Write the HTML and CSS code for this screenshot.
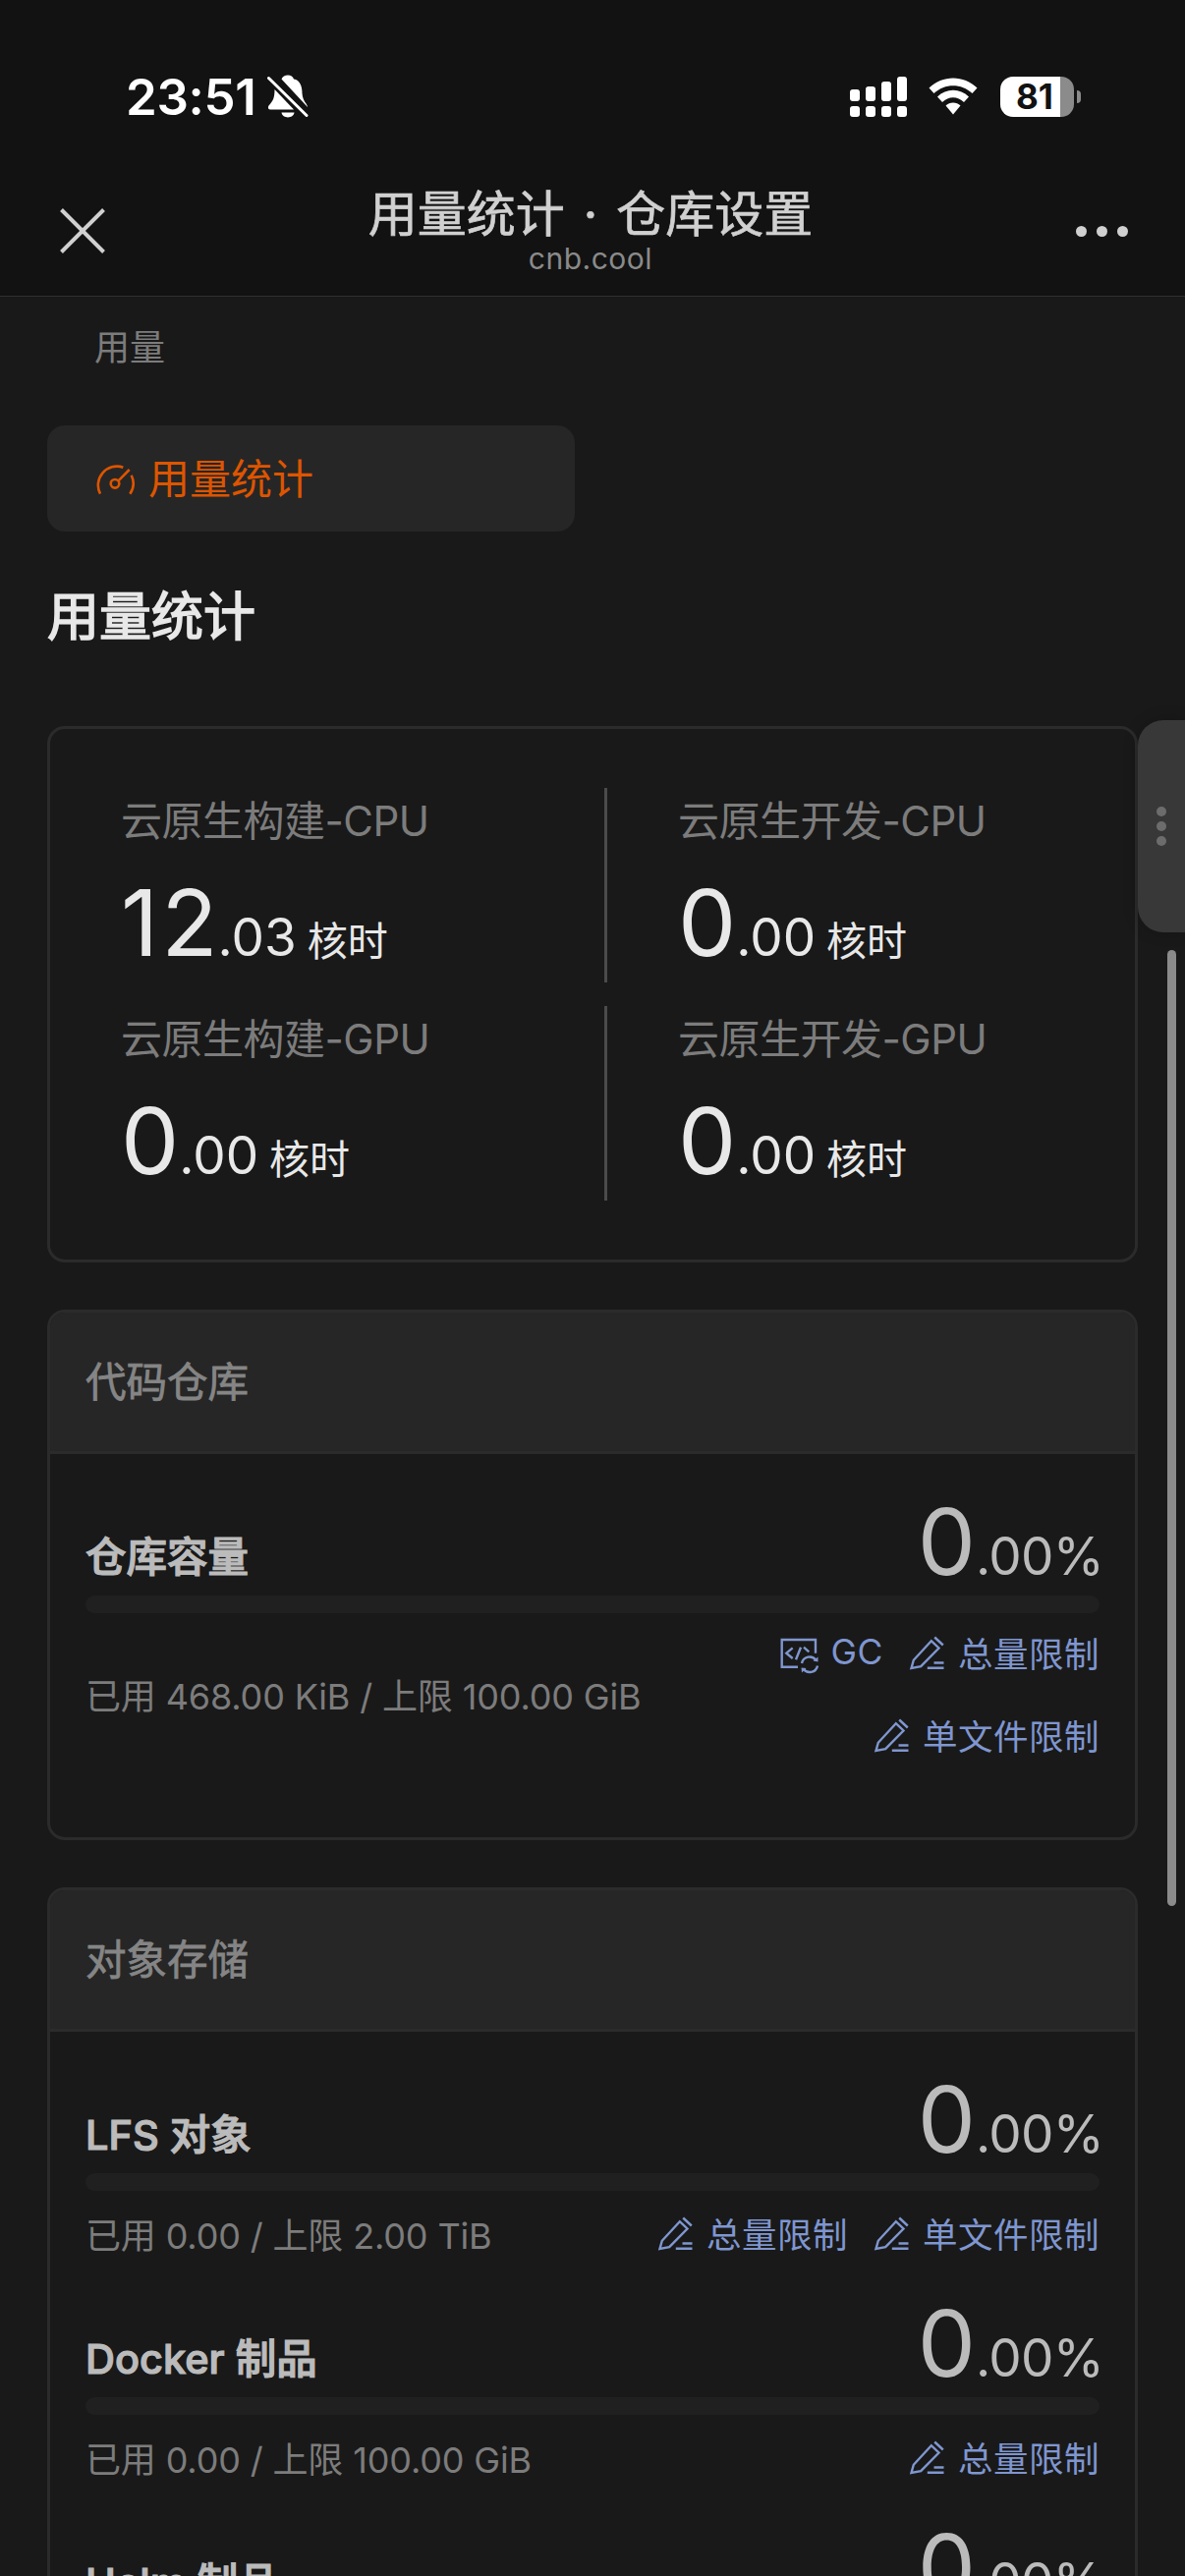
FILE: index.html
```html
<!DOCTYPE html>
<html lang="zh-CN">
  <head>
    <meta charset="UTF-8" />
    <meta name="viewport" content="width=device-width, initial-scale=1.0" />
    <link rel="stylesheet" href="styles.css">
    <title>用量统计 · 仓库设置</title>
  </head>
  <body>
    <!-- 公用图标 -->
    <svg class="symbols">
      <symbol id="icon-edit" viewBox="0 0 36 36">
        <path d="M22.8 5.2L4.8 24.8L2.5 33L12.2 31.2L30.5 12.5ZM26.2 1.5L34.8 9.5M25.5 27.5H35.5M18.8 32.8H35.5" />
      </symbol>
      <symbol id="icon-gc" viewBox="0 0 42 42">
        <path d="M37 20.700V7H2.700V34.700H19M13.700 15.300L7.300 20.700L13.700 26M22 14.700L17 27.300M25 14.700L30.300 19.300M23 31A8 8 0 0 1 37.500 28M39 33.500A8 8 0 0 1 24.500 36.500" />
        <path class="fill" d="M34.500 28.500L39.500 29.500L39.500 24.500ZM27.500 36L22.500 35.500L23 40.500Z" />
      </symbol>
    </svg>

    <header class="header">
      <div class="status-bar">
        <div class="status-left">
          <span class="time">23:51</span>
          <svg class="bell" viewBox="0 0 42 44">
            <path d="M21 0.500C18 0.500 15.500 2 14.500 4.500L41 33C41 30 36 27 35.500 19C35.500 11 33 5.500 27 4.500C26 2 24 0.500 21 0.500Z" />
            <path d="M7.500 15L27 35.500H3C0.500 35.500 0.500 32.500 2 31C5.500 27 7.500 24 7.500 15Z" />
            <path d="M14.500 38.500H27.500C26.500 45 15.500 45 14.500 38.500Z" />
            <path class="slash" d="M1.500 3.500L40 41.500" />
          </svg>
        </div>
        <div class="status-right">
          <svg class="signal" viewBox="0 0 58 41">
            <rect x="0" y="13" width="10" height="12" rx="3" />
            <rect x="16" y="10" width="10" height="15" rx="3" />
            <rect x="32" y="5" width="10" height="20" rx="3" />
            <rect x="48" y="0" width="10" height="25" rx="3" />
            <rect x="0" y="30" width="10" height="11" rx="3" />
            <rect x="16" y="30" width="10" height="11" rx="3" />
            <rect x="32" y="30" width="10" height="11" rx="3" />
            <rect x="48" y="30" width="10" height="11" rx="3" />
          </svg>
          <svg class="wifi" viewBox="0 0 50 38">
            <path d="M0.500 10.500C14 -3 36 -3 49.500 10.500L44.500 16C33.500 5.500 16.500 5.500 5.500 16Z" />
            <path d="M9 19.500C18 10.500 32 10.500 41 19.500L36 25C29.500 18.500 20.500 18.500 14 25Z" />
            <path d="M17.500 28.500C21.500 24.500 28.500 24.500 32.500 28.500L25 37.500Z" />
          </svg>
          <div class="battery">
            <span class="battery-body">81</span>
            <span class="battery-cap"></span>
          </div>
        </div>
      </div>
      <div class="nav">
        <svg class="close" viewBox="0 0 46 46">
          <path d="M1.500 1.500L44.500 44.500M44.500 1.500L1.500 44.500" />
        </svg>
        <div class="nav-title">
          <h1>用量统计 · 仓库设置</h1>
          <span>cnb.cool</span>
        </div>
        <div class="more"><i></i><i></i><i></i></div>
      </div>
    </header>

    <main class="main">
      <p class="menu-group">用量</p>
      <div class="menu-item">
        <svg viewBox="0 0 42 42">
          <path d="M6 36.700A19.200 19.200 0 0 1 29.300 9.700M37.700 17.700A19.200 19.200 0 0 1 36.300 36.700M35.700 12L24.500 23.300" />
          <circle cx="21" cy="26.300" r="4.300" />
        </svg>
        <span>用量统计</span>
      </div>
      <h2 class="page-title">用量统计</h2>

      <section class="card summary">
        <div class="stat split">
          <p class="label">云原生构建-CPU</p>
          <p class="value"><b>12</b><em>.03</em><span>核时</span></p>
        </div>
        <div class="stat">
          <p class="label">云原生开发-CPU</p>
          <p class="value"><b>0</b><em>.00</em><span>核时</span></p>
        </div>
        <div class="stat split">
          <p class="label">云原生构建-GPU</p>
          <p class="value"><b>0</b><em>.00</em><span>核时</span></p>
        </div>
        <div class="stat">
          <p class="label">云原生开发-GPU</p>
          <p class="value"><b>0</b><em>.00</em><span>核时</span></p>
        </div>
      </section>

      <section class="card">
        <h3 class="card-header">代码仓库</h3>
        <div class="card-body">
          <div class="item">
            <div class="item-head">
              <h4>仓库容量</h4>
              <p class="value"><b>0</b><em>.00%</em></p>
            </div>
            <div class="progress"></div>
            <div class="item-foot">
              <span class="used">已用 468.00 KiB / 上限 100.00 GiB</span>
              <div class="actions">
                <a class="gc"><svg><use href="#icon-gc" /></svg>GC</a>
                <a><svg><use href="#icon-edit" /></svg>总量限制</a>
                <a><svg><use href="#icon-edit" /></svg>单文件限制</a>
              </div>
            </div>
          </div>
        </div>
      </section>

      <section class="card">
        <h3 class="card-header">对象存储</h3>
        <div class="card-body">
          <div class="item">
            <div class="item-head">
              <h4>LFS 对象</h4>
              <p class="value"><b>0</b><em>.00%</em></p>
            </div>
            <div class="progress"></div>
            <div class="item-foot">
              <span class="used">已用 0.00 / 上限 2.00 TiB</span>
              <div class="actions">
                <a><svg><use href="#icon-edit" /></svg>总量限制</a>
                <a><svg><use href="#icon-edit" /></svg>单文件限制</a>
              </div>
            </div>
          </div>
          <div class="item">
            <div class="item-head">
              <h4>Docker 制品</h4>
              <p class="value"><b>0</b><em>.00%</em></p>
            </div>
            <div class="progress"></div>
            <div class="item-foot">
              <span class="used">已用 0.00 / 上限 100.00 GiB</span>
              <div class="actions">
                <a><svg><use href="#icon-edit" /></svg>总量限制</a>
              </div>
            </div>
          </div>
          <div class="item">
            <div class="item-head">
              <h4>Helm 制品</h4>
              <p class="value"><b>0</b><em>.00%</em></p>
            </div>
          </div>
        </div>
      </section>
    </main>

    <div class="side-tab"><i></i><i></i><i></i></div>
    <div class="scrollbar"></div>
  </body>
</html>
```
FILE: styles.css
```css
* {
  margin: 0;
  padding: 0;
  box-sizing: border-box;
}

body {
  position: relative;
  height: 2622px;
  overflow: hidden;
  background: #191919;
  color: #e8e8e8;
  font-family: Inter, "Noto Sans CJK SC", sans-serif;
}

i,
em {
  font-style: normal;
}

.symbols {
  display: none;
}

/* 顶部 */
.header {
  height: 302px;
  background: #121212;
  border-bottom: 1px solid #303030;
}

.status-bar {
  display: flex;
  height: 196px;
  padding: 0 106px 0 128px;
  justify-content: space-between;
  align-items: center;
}

.status-left,
.status-right {
  display: flex;
  align-items: center;
}

.time {
  width: 144px;
  color: #fff;
  font-size: 51px;
  font-weight: 600;
  letter-spacing: -0.3px;
}

.bell {
  width: 42px;
  height: 44px;
  fill: #fff;
}

.bell .slash {
  stroke: #fff;
  stroke-width: 3;
  stroke-linecap: round;
}

.signal {
  width: 58px;
  height: 41px;
  margin-right: 22px;
  fill: #fff;
}

.wifi {
  width: 50px;
  height: 38px;
  margin-right: 23px;
  fill: #fff;
}

.battery {
  display: flex;
  align-items: center;
  gap: 3px;
}

.battery-body {
  width: 75px;
  height: 41px;
  padding-left: 16px;
  border-radius: 13px;
  background: linear-gradient(90deg, #fff 61px, #8b8b8b 61px);
  color: #121212;
  font-size: 35px;
  font-weight: 700;
  line-height: 41px;
}

.battery-cap {
  width: 4px;
  height: 13px;
  border-radius: 0 4px 4px 0;
  background: #8b8b8b;
}

.nav {
  display: flex;
  height: 84px;
  padding: 0 58px 0 61px;
  justify-content: space-between;
  align-items: flex-start;
}

.close {
  width: 46px;
  height: 46px;
  margin-top: 16px;
  stroke: #d0d0d0;
  stroke-width: 4;
}

.nav-title {
  display: flex;
  flex-direction: column;
  align-items: center;
  color: #d0d0d0;
}

.nav-title h1 {
  margin-top: -4px;
  font-size: 50px;
  font-weight: 400;
  line-height: 52px;
  word-spacing: 5px;
  -webkit-text-stroke: 0.7px #d0d0d0;
}

.nav-title span {
  color: #8a8a8a;
  font-size: 30px;
  line-height: 38px;
  letter-spacing: 0.5px;
}

.more {
  display: flex;
  margin-top: 34px;
  gap: 10px;
}

.more i {
  width: 11px;
  height: 11px;
  border-radius: 50%;
  background: #d0d0d0;
}

/* 菜单 */
.main {
  padding: 0 48px;
}

.menu-group {
  padding: 27px 48px 0;
  color: #7c7c7c;
  font-size: 36px;
  line-height: 50px;
}

.menu-item {
  display: flex;
  width: 537px;
  height: 108px;
  margin-top: 54px;
  padding: 0 48px;
  align-items: center;
  gap: 13px;
  border-radius: 18px;
  background: #262626;
  color: #dd5500;
  font-size: 42px;
}

.menu-item span {
  padding-bottom: 5px;
}

.menu-item svg {
  width: 42px;
  height: 42px;
  fill: none;
  stroke: #dd5500;
  stroke-width: 2.6;
}

.page-title {
  margin: 51px 0 75px;
  font-size: 53px;
  font-weight: 400;
  line-height: 72px;
  -webkit-text-stroke: 1.6px #e8e8e8;
}

/* 卡片 */
.card {
  margin-bottom: 48px;
  border: 3px solid #2b2b2b;
  border-radius: 18px;
  overflow: hidden;
}

.summary {
  display: grid;
  padding: 60px 0;
  grid-template-columns: 567px 1fr;
  row-gap: 24px;
}

.stat {
  height: 198px;
  padding-left: 72px;
}

.stat.split {
  border-right: 3px solid #4b4b4b;
}

.label {
  color: #7c7c7c;
  font-size: 42px;
  line-height: 68px;
  letter-spacing: -0.5px;
}

.value {
  display: flex;
  align-items: baseline;
  line-height: 138px;
}

.value b {
  font-size: 94px;
  font-weight: 400;
  letter-spacing: 3px;
}

.value em {
  margin-left: -3px;
  font-size: 53px;
}

.value span {
  margin-left: 11px;
  font-size: 41px;
}

.card-header {
  height: 144px;
  padding-left: 36px;
  border-bottom: 3px solid #2b2b2b;
  background: #262626;
  color: #858585;
  font-size: 41.500px;
  font-weight: 400;
  line-height: 142px;
  -webkit-text-stroke: 0.8px #858585;
}

.card-body {
  padding: 54px 36px 30px;
}

.item {
  margin-bottom: 30px;
}

.item-head {
  display: flex;
  height: 90px;
  justify-content: space-between;
  color: #bbb;
}

.item-head h4 {
  font-size: 41.500px;
  font-weight: 500;
  line-height: 103px;
  -webkit-text-stroke: 1.2px #bbb;
}

.item-head .value {
  margin-right: -4px;
  line-height: 70px;
}

.item-head .value em {
  letter-spacing: -0.7px;
}

.progress {
  height: 18px;
  border-radius: 9px;
  background: #202020;
}

.item-foot {
  display: flex;
  min-height: 90px;
  justify-content: space-between;
  align-items: center;
}

.used {
  flex-shrink: 0;
  padding-bottom: 5px;
  color: #7c7c7c;
  font-size: 36px;
  letter-spacing: -0.15px;
}

.actions {
  display: flex;
  flex-wrap: wrap;
  justify-content: flex-end;
  column-gap: 26px;
}

.actions a {
  display: flex;
  height: 84px;
  padding-bottom: 5px;
  align-items: center;
  gap: 14px;
  color: #7f96cf;
  font-size: 35.500px;
  letter-spacing: 0.5px;
}

.actions svg {
  width: 36px;
  height: 36px;
  margin-top: 3px;
  fill: none;
  stroke: #7f96cf;
  stroke-width: 2.4;
}

.actions .gc {
  gap: 11px;
}

.actions .gc svg {
  width: 42px;
  height: 42px;
}

.fill {
  fill: #7f96cf;
  stroke: none;
}

/* 悬浮 */
.side-tab {
  position: absolute;
  top: 733px;
  right: 0;
  display: flex;
  width: 48px;
  height: 216px;
  flex-direction: column;
  justify-content: center;
  align-items: center;
  gap: 5px;
  border-radius: 26px 0 0 26px;
  background: #383838;
  box-shadow: 0 0 16px rgba(0, 0, 0, 0.2);
}

.side-tab i {
  width: 10px;
  height: 10px;
  border-radius: 50%;
  background: #6c6c6c;
}

.scrollbar {
  position: absolute;
  top: 967px;
  right: 9px;
  width: 9px;
  height: 973px;
  border-radius: 5px;
  background: #8b8b8b;
}
```
